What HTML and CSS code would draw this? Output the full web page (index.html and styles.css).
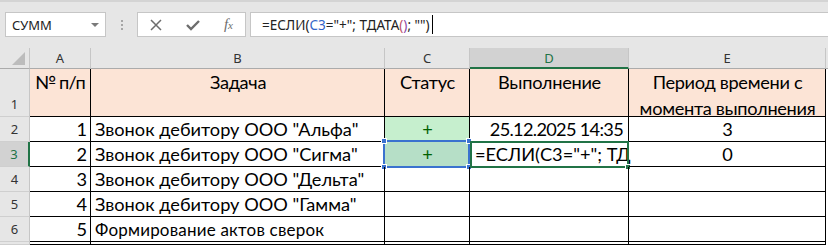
FILE: index.html
```html
<!DOCTYPE html>
<html lang="ru">

<head>
    <meta charset="UTF-8">
    <meta name="viewport" content="width=device-width, initial-scale=1.0">
    <title>Книга1 - Excel</title>
    <link rel="stylesheet" href="styles.css">
</head>

<body>

    <div class="app">
        <div class="top-strip"></div>

        <div class="formula-row">
            <div class="name-box">
                <span>СУММ</span>
                <span class="caret"></span>
            </div>
            <div class="grip">
                <span></span><span></span><span></span>
            </div>
            <div class="fx-buttons">
                <svg width="14" height="14" viewBox="0 0 14 14">
                    <path d="M2 2 L12 12 M12 2 L2 12" stroke="#6d6d6d" stroke-width="1.5" fill="none" />
                </svg>
                <svg width="16" height="14" viewBox="0 0 16 14">
                    <path d="M2 7 L6 11 L14 3" stroke="#6d6d6d" stroke-width="2.4" fill="none" />
                </svg>
                <span class="fx">f<i>x</i></span>
            </div>
            <div class="formula-input">
                <span>=ЕСЛИ(</span><span class="ref">C3</span><span>="+"; ТДАТА</span><span class="p1">(</span><span class="p2">)</span><span>; "")</span><span class="cursor"></span>
            </div>
        </div>

        <div class="sheet">
            <!-- column headers -->
            <div class="corner"><span class="tri"></span></div>
            <div class="col-head">A</div>
            <div class="col-head">B</div>
            <div class="col-head">C</div>
            <div class="col-head active">D</div>
            <div class="col-head">E</div>
            <div class="col-head rest"></div>

            <!-- row 1 -->
            <div class="row-head bottom">1</div>
            <div class="cell head left">№ п/п</div>
            <div class="cell head center">Задача</div>
            <div class="cell head center">Статус</div>
            <div class="cell head center">Выполнение</div>
            <div class="cell head center">Период времени с момента выполнения</div>
            <div class="cell rest"></div>

            <!-- row 2 -->
            <div class="row-head">2</div>
            <div class="cell num">1</div>
            <div class="cell">Звонок дебитору ООО "Альфа"</div>
            <div class="cell done center">+</div>
            <div class="cell num date">25.12.2025 14:35</div>
            <div class="cell center">3</div>
            <div class="cell rest"></div>

            <!-- row 3 -->
            <div class="row-head active">3</div>
            <div class="cell num">2</div>
            <div class="cell">Звонок дебитору ООО "Сигма"</div>
            <div class="cell done picked center">+
                <span class="ref-box">
                    <i class="h tl"></i><i class="h tr"></i><i class="h bl"></i><i class="h br"></i>
                </span>
            </div>
            <div class="cell editing"><span class="clip">=ЕСЛИ(C3="+"; ТД</span>
                <span class="active-box"><i class="fill"></i></span>
            </div>
            <div class="cell center">0</div>
            <div class="cell rest"></div>

            <!-- row 4 -->
            <div class="row-head">4</div>
            <div class="cell num">3</div>
            <div class="cell">Звонок дебитору ООО "Дельта"</div>
            <div class="cell"></div>
            <div class="cell"></div>
            <div class="cell"></div>
            <div class="cell rest"></div>

            <!-- row 5 -->
            <div class="row-head">5</div>
            <div class="cell num">4</div>
            <div class="cell">Звонок дебитору ООО "Гамма"</div>
            <div class="cell"></div>
            <div class="cell"></div>
            <div class="cell"></div>
            <div class="cell rest"></div>

            <!-- row 6 -->
            <div class="row-head">6</div>
            <div class="cell num">5</div>
            <div class="cell small">Формирование актов сверок</div>
            <div class="cell"></div>
            <div class="cell"></div>
            <div class="cell"></div>
            <div class="cell rest"></div>

            <!-- row 7 -->
            <div class="row-head"></div>
            <div class="cell"></div>
            <div class="cell"></div>
            <div class="cell"></div>
            <div class="cell"></div>
            <div class="cell"></div>
            <div class="cell rest"></div>
        </div>
    </div>

</body>

</html>
```

FILE: styles.css
```css
* {
    box-sizing: border-box;
    margin: 0;
    padding: 0;
}

body {
    width: 828px;
    height: 245px;
    overflow: hidden;
    background-color: #e6e6e6;
    font-family: "Noto Sans", "Open Sans", sans-serif;
}

.app {
    display: flex;
    flex-direction: column;
    height: 245px;
}

.top-strip {
    height: 12px;
    border-top: 2px solid #d4d4d4;
}

/* formula bar */

.formula-row {
    display: flex;
    align-items: center;
    height: 25px;
    padding-left: 5px;
}

.name-box {
    width: 101px;
    height: 25px;
    background-color: #fff;
    border: 1px solid #c6c6c6;
    display: flex;
    align-items: center;
    justify-content: space-between;
    padding: 0 6px 0 6px;
    font-size: 13px;
    color: #222;
}

.caret {
    width: 0;
    height: 0;
    border-left: 4px solid transparent;
    border-right: 4px solid transparent;
    border-top: 4px solid #7a7a7a;
}

.grip {
    width: 31px;
    display: flex;
    flex-direction: column;
    align-items: center;
    gap: 2px;
}

.grip span {
    width: 2px;
    height: 2px;
    background-color: #a6a6a6;
}

.fx-buttons {
    width: 109px;
    height: 25px;
    background-color: #fff;
    border: 1px solid #c6c6c6;
    display: flex;
    align-items: center;
    justify-content: space-between;
    padding: 0 12px 0 11px;
}

.fx {
    font-family: "Liberation Serif", serif;
    font-style: italic;
    font-size: 15px;
    color: #6d6d6d;
}

.fx i {
    font-size: 11px;
}

.formula-input {
    flex: 1;
    height: 25px;
    margin-left: 4px;
    background-color: #fff;
    border: 1px solid #c6c6c6;
    border-right: none;
    display: flex;
    align-items: center;
    padding-left: 11px;
    font-size: 13.5px;
    color: #222;
    white-space: pre;
}

.formula-input .ref {
    color: #3465c8;
}

.formula-input .p1 {
    color: #c0506a;
}

.formula-input .p2 {
    color: #8a4aa8;
}

.cursor {
    width: 1px;
    height: 19px;
    background-color: #000;
    margin-left: 2px;
}

/* sheet grid */

.sheet {
    margin-top: 11px;
    flex: 1;
    display: grid;
    grid-template-columns: 30px 61px 294px 85px 159px 197px 1fr;
    grid-template-rows: 21px 48px 25px 25px 25px 25px 25px 1fr;
    background-color: #fff;
}

.corner {
    position: relative;
    background-color: #e6e6e6;
    border-right: 1px solid #c6c6c6;
    border-bottom: 1px solid #ababab;
}

.tri {
    position: absolute;
    right: 4px;
    bottom: 3px;
    width: 0;
    height: 0;
    border-left: 13px solid transparent;
    border-bottom: 13px solid #bcbcbc;
}

.col-head {
    background-color: #e6e6e6;
    border-right: 1px solid #c6c6c6;
    border-bottom: 1px solid #ababab;
    font-size: 13px;
    color: #333;
    text-align: center;
    line-height: 20px;
}

.col-head.active {
    background-color: #d2d2d2;
    color: #217346;
    border-bottom: 2px solid #217346;
}

.col-head.rest {
    border-right: none;
}

.row-head {
    background-color: #e6e6e6;
    border-right: 1px solid #c6c6c6;
    border-bottom: 1px solid #cfcfcf;
    font-size: 13px;
    color: #333;
    display: flex;
    align-items: center;
    justify-content: center;
}

.row-head.bottom {
    align-items: flex-end;
    padding-bottom: 3px;
}

.row-head.active {
    background-color: #d2d2d2;
    color: #217346;
    border-right: 2px solid #217346;
}

.cell {
    position: relative;
    border-right: 1px solid #000;
    border-bottom: 1px solid #000;
    font-family: Lato, "Noto Sans", sans-serif;
    font-size: 18.2px;
    color: #000;
    display: flex;
    align-items: center;
    padding: 0 3px 0 4px;
    white-space: nowrap;
}

.cell.rest {
    border: none;
    background-color: #fff;
}

.cell.head {
    background-color: #fce4d6;
    align-items: flex-start;
    padding-top: 0;
    white-space: normal;
    line-height: 26px;
    letter-spacing: -0.3px;
}

.cell.center {
    justify-content: center;
    text-align: center;
}

.cell.left {
    padding-left: 5px;
    white-space: nowrap;
    letter-spacing: -0.8px;
}

.cell.num {
    justify-content: flex-end;
}

.cell.date {
    letter-spacing: -0.7px;
    padding-right: 5px;
}

.cell.small {
    font-size: 17px;
    letter-spacing: 0.2px;
    padding-top: 1px;
}

.cell.done {
    background-color: #c6efce;
    color: #006100;
}

.cell.done.picked {
    background-color: #b6dfc7;
}

.cell.editing {
    padding-left: 5px;
}

.ref-box {
    position: absolute;
    left: -2px;
    top: -2px;
    right: -1px;
    bottom: -2px;
    border: 2px solid #3a72cf;
}

.h {
    position: absolute;
    width: 6px;
    height: 6px;
    background-color: #3a72cf;
    border: 1px solid #fff;
}

.h.tl { left: -4px; top: -4px; }
.h.tr { right: -4px; top: -4px; }
.h.bl { left: -4px; bottom: -4px; }
.h.br { right: -4px; bottom: -4px; }

.active-box {
    position: absolute;
    left: 0;
    top: -1px;
    right: -1px;
    bottom: -2px;
    border: 2px solid #217346;
}

.fill {
    position: absolute;
    right: -4px;
    bottom: -4px;
    width: 6px;
    height: 6px;
    background-color: #217346;
    border: 1px solid #fff;
}
```
